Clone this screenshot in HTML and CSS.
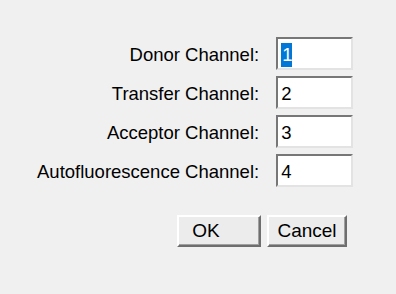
FILE: index.html
```html
<!DOCTYPE html>
<html>
<head>
    <title>Channels</title>
    <link rel="stylesheet" href="styles.css">
</head>
<body>
    <div class="dialog">
        <div class="fields">
            <label class="field-label">Donor Channel:</label>
            <div class="text-field"><span class="selected">1</span></div>
            <label class="field-label">Transfer Channel:</label>
            <div class="text-field">2</div>
            <label class="field-label">Acceptor Channel:</label>
            <div class="text-field">3</div>
            <label class="field-label">Autofluorescence Channel:</label>
            <div class="text-field">4</div>
        </div>
        <div class="buttons">
            <button class="button ok-button">OK</button>
            <button class="button">Cancel</button>
        </div>
    </div>
</body>
</html>
```

FILE: styles.css
```css
body {
    margin: 0;
    padding: 0;
    background-color: #f0f0f0;
    font-family: "Liberation Sans", Arial, sans-serif;
    font-size: 18.5px;
    color: #000;
}
.dialog {
    display: flex;
    flex-direction: column;
    padding: 37px 0 0 37px;
}
.fields {
    display: grid;
    grid-template-columns: max-content 77px;
    column-gap: 17px;
    row-gap: 6px;
    align-items: center;
}
.field-label {
    text-align: right;
    margin-top: 2px;
}
.text-field {
    box-sizing: border-box;
    height: 33px;
    padding: 4px 0 0 3px;
    background-color: #fff;
    border: 2px solid;
    border-color: #777 #e3e3e3 #e3e3e3 #777;
    line-height: 24px;
}
.selected {
    background-color: #0078d7;
    color: #fff;
    padding: 0 0 0 1px;
    display: inline-block;
    width: 10px;
}
.buttons {
    display: flex;
    justify-content: flex-end;
    gap: 6px;
    margin-top: 28px;
    padding-right: 49px;
}
.button {
    box-sizing: border-box;
    height: 32px;
    width: 80px;
    background-color: #ececec;
    border: 2px solid;
    border-color: #fff #6e6e6e #6e6e6e #fff;
    box-shadow: inset -1px -1px 0 #a0a0a0;
    font-family: "Liberation Sans", Arial, sans-serif;
    font-size: 19px;
    color: #000;
    padding: 0;
}
.ok-button {
    width: 84px;
    padding-right: 26px;
}
```
